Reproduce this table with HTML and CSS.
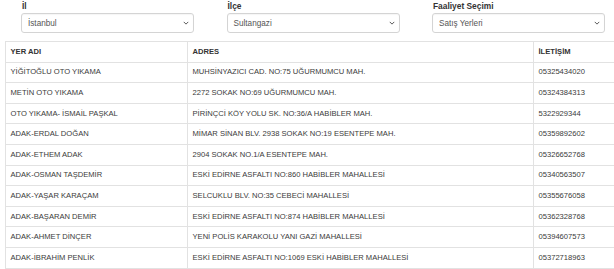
FILE: index.html
```html
<!DOCTYPE html>
<html lang="tr">
<head>
<meta charset="utf-8">
<link rel="stylesheet" href="styles.css">
</head>
<body>
<div class="filters">
  <div class="field">
    <label class="label">İl</label>
    <div class="select"><span>İstanbul</span><svg class="chev" viewBox="0 0 8 5" width="6" height="4"><path d="M1 1l3 3 3-3" fill="none" stroke="#555" stroke-width="1.3"/></svg></div>
  </div>
  <div class="field">
    <label class="label">İlçe</label>
    <div class="select"><span>Sultangazi</span><svg class="chev" viewBox="0 0 8 5" width="6" height="4"><path d="M1 1l3 3 3-3" fill="none" stroke="#555" stroke-width="1.3"/></svg></div>
  </div>
  <div class="field">
    <label class="label">Faaliyet Seçimi</label>
    <div class="select"><span>Satış Yerleri</span><svg class="chev" viewBox="0 0 8 5" width="6" height="4"><path d="M1 1l3 3 3-3" fill="none" stroke="#555" stroke-width="1.3"/></svg></div>
  </div>
</div>
<table class="grid">
  <colgroup><col class="c1"><col class="c2"><col class="c3"></colgroup>
  <thead>
    <tr><th>YER ADI</th><th>ADRES</th><th>İLETİŞİM</th></tr>
  </thead>
  <tbody>
    <tr><td>YİĞİTOĞLU OTO YIKAMA</td><td>MUHSİNYAZICI CAD. NO:75 UĞURMUMCU MAH.</td><td>05325434020</td></tr>
    <tr><td>METİN OTO YIKAMA</td><td>2272 SOKAK NO:69 UĞURMUMCU MAH.</td><td>05324384313</td></tr>
    <tr><td>OTO YIKAMA- İSMAİL PAŞKAL</td><td>PİRİNÇCİ KÖY YOLU SK. NO:36/A HABİBLER MAH.</td><td>5322929344</td></tr>
    <tr><td>ADAK-ERDAL DOĞAN</td><td>MİMAR SİNAN BLV. 2938 SOKAK NO:19 ESENTEPE MAH.</td><td>05359892602</td></tr>
    <tr><td>ADAK-ETHEM ADAK</td><td>2904 SOKAK NO.1/A ESENTEPE MAH.</td><td>05326652768</td></tr>
    <tr><td>ADAK-OSMAN TAŞDEMİR</td><td>ESKİ EDİRNE ASFALTI NO:860 HABİBLER MAHALLESİ</td><td>05340563507</td></tr>
    <tr><td>ADAK-YAŞAR KARAÇAM</td><td>SELCUKLU BLV. NO:35 CEBECİ MAHALLESİ</td><td>05355676058</td></tr>
    <tr><td>ADAK-BAŞARAN DEMİR</td><td>ESKİ EDİRNE ASFALTI NO:874 HABİBLER MAHALLESİ</td><td>05362328768</td></tr>
    <tr><td>ADAK-AHMET DİNÇER</td><td>YENİ POLİS KARAKOLU YANI GAZİ MAHALLESİ</td><td>05394607573</td></tr>
    <tr><td>ADAK-İBRAHİM PENLİK</td><td>ESKİ EDİRNE ASFALTI NO:1069 ESKİ HABİBLER MAHALLESİ</td><td>05372718963</td></tr>
  </tbody>
</table>
</body>
</html>
```
FILE: styles.css
```css
html, body {
  margin: 0;
  padding: 0;
  background: #fff;
  overflow: hidden;
}
body {
  font-family: "Liberation Sans", Arial, Helvetica, sans-serif;
  color: #333;
}
.filters {
  box-sizing: border-box;
  display: grid;
  grid-template-columns: repeat(3, 205.5px);
  padding: 1px 0 0 5px;
  height: 41px;
}
.field {
  display: flex;
  flex-direction: column;
  padding: 0 16.5px 0 16px;
}
.label {
  font-weight: bold;
  font-size: 8.4px;
  line-height: 10px;
  height: 12px;
  padding-left: 1px;
  color: #333;
}
.select {
  box-sizing: border-box;
  height: 20px;
  border: 1px solid #d4d4d4;
  border-radius: 3px;
  display: flex;
  align-items: center;
  justify-content: space-between;
  padding: 0 4px 0 6px;
  font-size: 8.2px;
  color: #555;
  box-shadow: inset 0 1px 1px rgba(0,0,0,0.04);
}
.chev { display: block; }
.grid {
  margin-left: 5px;
  border-collapse: collapse;
  table-layout: fixed;
  width: 609px;
  font-size: 7.6px;
}
.c1 { width: 182px; }
.c2 { width: 346px; }
.c3 { width: 81px; }
.grid th, .grid td {
  border: 1px solid #e2e2e2;
  padding: 4.8px 4.5px;
  line-height: 10px;
  text-align: left;
  white-space: nowrap;
  overflow: hidden;
}
.grid th:last-child, .grid td:last-child { border-right: none; }
.grid th { font-weight: bold; color: #333; }
.grid td { color: #3a3a3a; }
```
